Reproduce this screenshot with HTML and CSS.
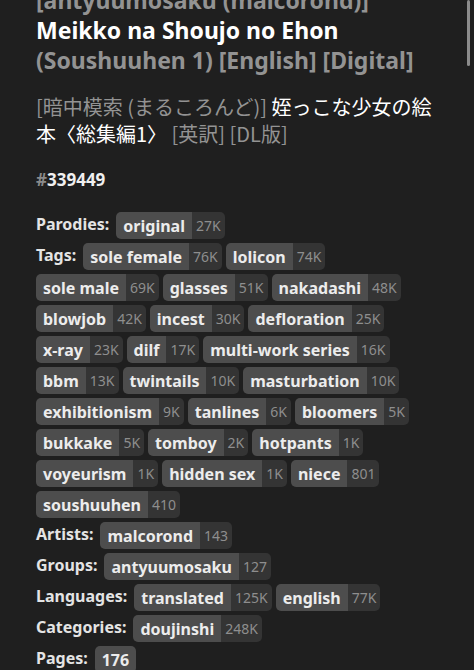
FILE: index.html
```html
<!DOCTYPE html>
<html lang="en">
  <head>
    <meta charset="UTF-8" />
    <meta name="viewport" content="width=device-width, initial-scale=1.0" />
    <title>Gallery Info</title>
    <link rel="stylesheet" href="styles.css">
  </head>
  <body>
    <!-- Scroll indicator -->
    <div class="scroll-thumb"></div>

    <div id="info">
      <h1 class="title">
        <span class="muted">[antyuumosaku (malcorond)]</span>
        <span class="pretty">Meikko na Shoujo no Ehon</span>
        <span class="muted">(Soushuuhen 1) [English] [Digital]</span>
      </h1>
      <h2 class="title-jp">
        <span class="muted">[暗中模索 (まるころんど)]</span>
        <span class="pretty">姪っこな少女の絵本〈総集編1〉</span>
        <span class="muted">[英訳] [DL版]</span>
      </h2>

      <h3 class="gallery-id"><span class="hash">#</span>339449</h3>

      <section class="tag-list">
        <div class="field">
          <span class="label">Parodies:</span>
          <a class="tag"><span class="name">original</span><span class="count">27K</span></a>
        </div>
        <div class="field">
          <span class="label">Tags:</span>
          <a class="tag"><span class="name">sole female</span><span class="count">76K</span></a>
          <a class="tag"><span class="name">lolicon</span><span class="count">74K</span></a>
          <a class="tag"><span class="name">sole male</span><span class="count">69K</span></a>
          <a class="tag"><span class="name">glasses</span><span class="count">51K</span></a>
          <a class="tag"><span class="name">nakadashi</span><span class="count">48K</span></a>
          <a class="tag"><span class="name">blowjob</span><span class="count">42K</span></a>
          <a class="tag"><span class="name">incest</span><span class="count">30K</span></a>
          <a class="tag"><span class="name">defloration</span><span class="count">25K</span></a>
          <a class="tag"><span class="name">x-ray</span><span class="count">23K</span></a>
          <a class="tag"><span class="name">dilf</span><span class="count">17K</span></a>
          <a class="tag"><span class="name">multi-work series</span><span class="count">16K</span></a>
          <a class="tag"><span class="name">bbm</span><span class="count">13K</span></a>
          <a class="tag"><span class="name">twintails</span><span class="count">10K</span></a>
          <a class="tag"><span class="name">masturbation</span><span class="count">10K</span></a>
          <a class="tag"><span class="name">exhibitionism</span><span class="count">9K</span></a>
          <a class="tag"><span class="name">tanlines</span><span class="count">6K</span></a>
          <a class="tag"><span class="name">bloomers</span><span class="count">5K</span></a>
          <a class="tag"><span class="name">bukkake</span><span class="count">5K</span></a>
          <a class="tag"><span class="name">tomboy</span><span class="count">2K</span></a>
          <a class="tag"><span class="name">hotpants</span><span class="count">1K</span></a>
          <a class="tag"><span class="name">voyeurism</span><span class="count">1K</span></a>
          <a class="tag"><span class="name">hidden sex</span><span class="count">1K</span></a>
          <a class="tag"><span class="name">niece</span><span class="count">801</span></a>
          <a class="tag"><span class="name">soushuuhen</span><span class="count">410</span></a>
        </div>
        <div class="field">
          <span class="label">Artists:</span>
          <a class="tag"><span class="name">malcorond</span><span class="count">143</span></a>
        </div>
        <div class="field">
          <span class="label">Groups:</span>
          <a class="tag"><span class="name">antyuumosaku</span><span class="count">127</span></a>
        </div>
        <div class="field">
          <span class="label">Languages:</span>
          <a class="tag"><span class="name">translated</span><span class="count">125K</span></a>
          <a class="tag"><span class="name">english</span><span class="count">77K</span></a>
        </div>
        <div class="field">
          <span class="label">Categories:</span>
          <a class="tag"><span class="name">doujinshi</span><span class="count">248K</span></a>
        </div>
        <div class="field">
          <span class="label">Pages:</span>
          <a class="tag"><span class="name">176</span></a>
        </div>
      </section>
    </div>
  </body>
</html>
```

FILE: styles.css
```css
/* Global Styles */
body {
  margin: 0;
  height: 100vh;
  overflow: hidden;
  background-color: #1f1f1f;
  color: #e6e6e6;
  font-family: "Noto Sans", "Noto Sans CJK JP", sans-serif;
}

.scroll-thumb {
  position: absolute;
  top: 0;
  right: 4px;
  width: 3px;
  height: 66px;
  border-radius: 2px;
  background-color: #8c8c8c;
}

/* Info block (scrolled a little) */
#info {
  padding: 0 30px 0 36px;
  margin-top: -15px;
}

.muted {
  color: #939393;
}

.pretty {
  color: #ffffff;
}

.title {
  margin: 0;
  font-size: 23px;
  line-height: 30px;
  font-weight: 700;
}

.title-jp {
  margin: 18px 0 0;
  font-family: "Noto Sans CJK JP", sans-serif;
  font-size: 20px;
  line-height: 27px;
  font-weight: 400;
}

.gallery-id {
  margin: 21px 0 0;
  font-size: 17px;
  line-height: 24px;
  font-weight: 700;
  color: #f0f0f0;
}

.gallery-id .hash {
  color: #8a8a8a;
}

/* Tag fields */
.tag-list {
  margin-top: 20px;
}

.field {
  display: flex;
  flex-wrap: wrap;
  align-items: center;
  gap: 4px;
  margin-bottom: 4px;
}

.label {
  font-weight: 700;
  font-size: 16px;
  color: #e4e4e4;
  margin-right: 3px;
  line-height: 25px;
  align-self: flex-start;
}

.tag {
  display: flex;
  height: 27px;
  border-radius: 5px;
  overflow: hidden;
}

.tag .name {
  display: flex;
  align-items: center;
  padding: 0 7px;
  background-color: #4d4d4d;
  color: #ececec;
  font-size: 16px;
  font-weight: 700;
}

.tag .count {
  display: flex;
  align-items: center;
  padding: 0 4px;
  background-color: #343434;
  color: #8e8e8e;
  font-size: 14px;
}
```
